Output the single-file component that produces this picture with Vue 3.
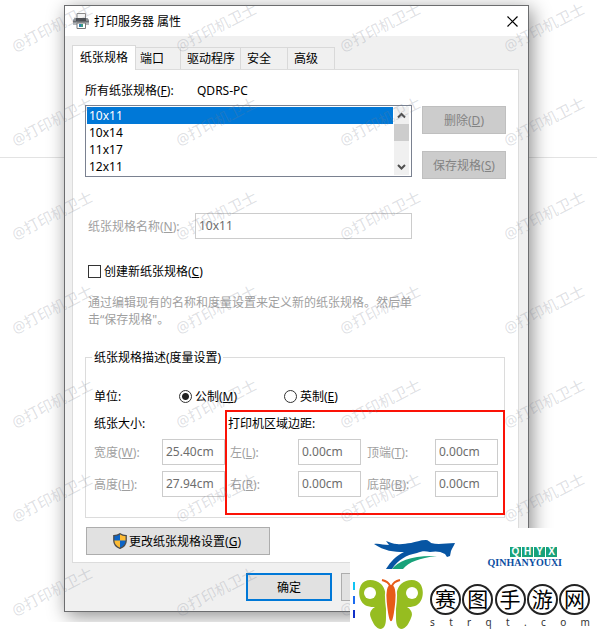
<template>
  <div class="page">
    <div class="desktop">
      <main class="dialog">
        <header class="titlebar">
          <svg class="printer" viewBox="0 0 16 16">
            <path d="M4 .5h8.500v6H4z" fill="#f4f4f4" stroke="#8b8b8b" />
            <path d="M1.500 5h13L16 7v5H0V7z" fill="#8b8f93" />
            <path d="M3 5h10v3H3z" fill="#4c4f53" />
            <path d="M0 8h16v1.500H0z" fill="#6a6d71" />
            <path d="M0 9.500h16V12H0z" fill="#b3b6b9" />
            <path d="M4 10h8.500v5.500H4z" fill="#fff" stroke="#777" />
            <path d="M6 11h2v3H6z" fill="#2f80b5" />
            <path d="M8 11h2v3H8z" fill="#3d9b80" />
          </svg>
          <h1>打印服务器 属性</h1>
          <button class="close" aria-label="关闭">
            <svg viewBox="0 0 11 11"><path d="M.5 .5l10 10M10.500 .5l-10 10" /></svg>
          </button>
        </header>

        <nav class="tabs">
          <button
            v-for="tab in tabs"
            :key="tab"
            :class="{ active: tab === activeTab }"
            @click="activeTab = tab"
          >{{ tab }}</button>
        </nav>

        <section class="panel">
          <div class="server">
            <label for="forms">所有纸张规格(<u>F</u>):</label>
            <span>QDRS-PC</span>
          </div>

          <div class="forms">
            <div class="listbox">
              <select id="forms" v-model="form" size="4">
                <option v-for="name in forms" :key="name">{{ name }}</option>
              </select>
              <div class="scrollbar">
                <svg viewBox="0 0 15 17"><path d="M4 10.500l3.500-3.500 3.500 3.500" /></svg>
                <div class="thumb"></div>
                <svg viewBox="0 0 15 17"><path d="M4 7l3.500 3.500L11 7" /></svg>
              </div>
            </div>
            <div class="form-actions">
              <button disabled>删除(<u>D</u>)</button>
              <button disabled>保存规格(<u>S</u>)</button>
            </div>
            <div class="name-row">
              <label for="formName">纸张规格名称(<u>N</u>):</label>
              <input id="formName" type="text" :value="form" disabled />
            </div>
          </div>

          <label class="create">
            <input v-model="create" type="checkbox" />
            <span>创建新纸张规格(<u>C</u>)</span>
          </label>
          <p class="hint">通过编辑现有的名称和度量设置来定义新的纸张规格。然后单击“保存规格"。</p>

          <fieldset>
            <legend>纸张规格描述(度量设置)</legend>
            <div class="units">
              <span>单位:</span>
              <label v-for="u in units" :key="u.key">
                <input v-model="unit" type="radio" name="unit" :value="u.key" />
                <span>{{ u.text }}(<u>{{ u.key }}</u>)</span>
              </label>
            </div>
            <div class="measures">
              <div class="size">
                <h2>纸张大小:</h2>
                <div class="fields">
                  <template v-for="f in sizes" :key="f.key">
                    <label :for="'f' + f.key">{{ f.text }}(<u>{{ f.key }}</u>):</label>
                    <input :id="'f' + f.key" type="text" :value="f.value" disabled />
                  </template>
                </div>
              </div>
              <div class="margins">
                <h2>打印机区域边距:</h2>
                <div class="fields">
                  <template v-for="f in margins" :key="f.key">
                    <label :for="'f' + f.key">{{ f.text }}(<u>{{ f.key }}</u>):</label>
                    <input :id="'f' + f.key" type="text" :value="f.value" disabled />
                  </template>
                </div>
              </div>
            </div>
          </fieldset>

          <button class="change">
            <svg viewBox="0 0 14 16">
              <path d="M7 .5C5 2 3 2.500 .8 2.500v5C.8 11 3.500 14 7 15.500z" fill="#0b63c5" />
              <path d="M7 .5c2 1.500 4 2 6.200 2v5c0 3.500-2.700 6.500-6.200 8z" fill="#fdbb33" />
              <path d="M.8 7.500H7v8C3.500 14 .8 11 .8 7.500z" fill="#fdbb33" />
              <path d="M7 7.500h6.200c0 3.500-2.700 6.500-6.200 8z" fill="#0b63c5" />
              <path d="M7 .7C5 2.200 3 2.600 .8 2.600v4.900C.8 11 3.500 14 7 15.300c3.500-1.300 6.200-4.300 6.200-7.800V2.600C11 2.600 9 2.200 7 .7z" fill="none" stroke="#4c4c4c" stroke-width="1.300" />
            </svg>
            <span>更改纸张规格设置(<u>G</u>)</span>
          </button>
        </section>

        <footer>
          <button class="primary">确定</button>
          <button></button>
        </footer>
      </main>

      <div class="watermarks" aria-hidden="true">
        <span v-for="n in 28" :key="n">@打印机卫士</span>
      </div>
    </div>

    <aside class="logos">
      <div class="brands">
        <svg class="dragon" viewBox="0 0 82 30">
          <path d="M0 4c5-1 9 1 15 1l-3-4c4 1 7 3 11 3 5 1 9-1 14-1 5-1 9-3 15-3 2 0 4 2 5 3 8 2 15 0 24 0-1 3-3 5-4 8l-1 5-3 1-2-3c-5-3-10-3-15-2-5-1-8-1-13 1-11 2-19 7-25 16h-6c5-8 10-13 18-17C20 12 10 11 0 4z" fill="#0755a3" />
          <path d="M18 29c6-8 20-14 45-13-18 2-28 6-34 13z" fill="#18a27a" />
        </svg>
        <div class="qhyx">
          <div class="tiles"><b v-for="c in 'QHYX'" :key="c">{{ c }}</b></div>
          <strong>QINHANYOUXI</strong>
        </div>
      </div>
      <div class="site">
        <div class="bars"><i></i><i></i><i></i></div>
        <svg class="butterfly" viewBox="0 0 64 50">
          <path d="M27 37C27 26 29 12 22 5 16 0 6-1 2 6c-4 8-1 19 6 21 3 1 6 1 8 1-5 3-6 7-4 11 2 5 5 11 10 11 5-1 5-8 5-13z" fill="#96bd20" />
          <path d="M37 37C37 26 35 12 42 5c6-5 16-6 20 1 4 8 1 19-6 21-3 1-6 1-8 1 5 3 6 7 4 11-2 5-5 11-10 11-5-1-5-8-5-13z" fill="#96bd20" />
          <circle cx="11" cy="14" r="6" fill="#fff" />
          <circle cx="53" cy="14" r="6" fill="#fff" />
          <path d="M32 5c5 0 6 9 5 18-1 10-2 20-5 20s-4-10-5-20c-1-9 0-18 5-18z" fill="#e75b18" stroke="#fff" stroke-width="1.500" />
          <path d="M31 7c-1-3-4-5-8-6M33 7c1-3 4-5 8-6" fill="none" stroke="#e75b18" stroke-width="2" />
        </svg>
        <div class="wordmark">
          <div class="circles"><span v-for="c in '赛图手游网'" :key="c">{{ c }}</span></div>
          <div class="domain"><span v-for="(c, i) in 'strqt.com'" :key="i">{{ c }}</span></div>
        </div>
      </div>
    </aside>
  </div>
</template>

<script setup>
import { ref } from "vue";

const tabs = ["纸张规格", "端口", "驱动程序", "安全", "高级"];
const activeTab = ref("纸张规格");

const forms = ["10x11", "10x14", "11x17", "12x11"];
const form = ref("10x11");
const create = ref(false);

const units = [
  { text: "公制", key: "M" },
  { text: "英制", key: "E" },
];
const unit = ref("M");

const sizes = [
  { text: "宽度", key: "W", value: "25.40cm" },
  { text: "高度", key: "H", value: "27.94cm" },
];

const margins = [
  { text: "左", key: "L", value: "0.00cm" },
  { text: "顶端", key: "T", value: "0.00cm" },
  { text: "右", key: "R", value: "0.00cm" },
  { text: "底部", key: "B", value: "0.00cm" },
];
</script>

<style>
body {
  background: #fff;
}
</style>

<style scoped>
* {
  box-sizing: border-box;
}

.page {
  position: relative;
  padding-bottom: 12px;
  font-family: "Noto Sans", "Noto Sans CJK SC", sans-serif;
  font-size: 12px;
  line-height: 17px;
  color: #000;
}

.desktop {
  position: relative;
  overflow: hidden;
  padding: 5px 71px 10px 64px;
}

.desktop::before {
  content: "";
  position: absolute;
  top: 157px;
  left: 0;
  right: 3px;
  border-top: 1px solid #e3e3e3;
}

.dialog {
  position: relative;
  border: 1px solid #6c6d6f;
  background: #f0f0f0;
  box-shadow: 3px 4px 18px rgba(0, 0, 0, 0.45);
}

button,
input,
select {
  margin: 0;
  font: inherit;
}

h1,
h2 {
  margin: 0;
  font-size: 12px;
  font-weight: 400;
}

.titlebar {
  display: flex;
  align-items: center;
  height: 30px;
  padding: 0 10px 0 8px;
  background: #fff;
}

.printer {
  width: 16px;
  height: 16px;
  margin-right: 5px;
}

.close {
  display: flex;
  margin-left: auto;
  padding: 0;
  border: none;
  background: none;
}

.close svg {
  width: 11px;
  height: 11px;
  stroke: #000;
  stroke-width: 1.2;
}

.tabs {
  display: flex;
  align-items: flex-end;
  margin-top: 9px;
  padding-left: 7px;
}

.tabs button {
  min-width: 47px;
  height: 22px;
  padding: 0 5px 0 6px;
  border: 1px solid #d9d9d9;
  border-width: 1px 1px 0 0;
  background: #f0f0f0;
  color: #000;
  text-align: left;
}

.tabs .active {
  position: relative;
  height: 25px;
  margin: 0 -2px -1px 0;
  padding: 0 7px 2px;
  border-left-width: 1px;
  background: #fff;
}

.panel {
  margin: 0 9px 0 7px;
  padding: 12px 12px 7px;
  border: 1px solid #dcdcdc;
  background: #fff;
}

.server {
  display: flex;
  margin-bottom: 6px;
}

.server label {
  width: 112px;
}

.forms {
  display: grid;
  grid-template-columns: 1fr 84px;
  column-gap: 10px;
}

.listbox {
  display: flex;
  height: 72px;
  padding: 1px;
  border: 1px solid #7a8190;
}

select {
  flex: 1;
  height: 68px;
  padding: 0;
  border: none;
  border-radius: 0;
  outline: none;
  background: #fff;
  overflow: hidden;
  scrollbar-width: none;
}

option {
  height: 17px;
  min-height: 17px;
  padding: 0 2px;
  color: #000;
}

option:checked {
  background: #0078d7 linear-gradient(#0078d7, #0078d7);
  color: #fff;
}

.scrollbar {
  width: 15px;
  margin: 0 1px;
  background: #f0f0f0;
  display: flex;
  flex-direction: column;
}

.scrollbar svg {
  width: 15px;
  height: 17px;
  fill: none;
  stroke: #505050;
  stroke-width: 2;
}

.scrollbar svg:last-child {
  margin-top: auto;
}

.thumb {
  height: 17px;
  background: #cdcdcd;
}

.form-actions {
  display: flex;
  flex-direction: column;
  gap: 17px;
  padding-top: 1px;
}

.form-actions button,
.change,
footer button {
  height: 28px;
  padding: 0;
  border: 1px solid #adadad;
  background: #e1e1e1;
  color: #000;
}

.form-actions button {
  border-color: #bfbfbf;
  background: #ccc;
  color: #838383;
}

.name-row {
  display: flex;
  align-items: center;
  margin-top: 34px;
  padding-left: 3px;
  color: #9f9f9f;
}

.name-row label {
  width: 107px;
}

input[type="text"] {
  min-width: 0;
  width: 100%;
  height: 26px;
  padding: 0 3px 2px;
  border: 1px solid #ccc;
  background: #fff;
  color: #6d6d6d;
}

.name-row input[type="text"] {
  flex: 1;
}

.create {
  display: flex;
  align-items: center;
  gap: 3px;
  width: max-content;
  margin-top: 24px;
  padding-left: 3px;
}

input[type="checkbox"],
input[type="radio"] {
  appearance: none;
  width: 13px;
  height: 13px;
  border: 1px solid #333;
  background: #fff;
}

input[type="radio"] {
  border-radius: 50%;
}

input[type="radio"]:checked {
  background: radial-gradient(circle, #222 3px, #fff 4px);
}

input[type="checkbox"]:checked {
  background: #333;
}

.hint {
  width: 325px;
  margin: 14px 0 21px;
  padding-left: 3px;
  box-sizing: content-box;
  color: #9f9f9f;
}

fieldset {
  min-width: 0;
  margin: 0 1px 0 0;
  padding: 0 0 2px;
  border: 1px solid #dcdcdc;
}

legend {
  margin-left: 6px;
  padding: 0 2px;
}

.units {
  display: flex;
  align-items: center;
  padding: 22px 0 5px 8px;
}

.units > span {
  width: 85px;
}

.units label {
  display: flex;
  align-items: center;
  gap: 3px;
  width: 105px;
}

.measures {
  display: flex;
}

.size {
  width: 139px;
  padding: 5px 0 0 8px;
}

.margins {
  flex: 1;
  margin-right: -1px;
  padding: 3px 5px 16px 1px;
  border: 2px solid #fb1206;
}

.fields {
  display: grid;
  grid-template-columns: 68px 1fr;
  row-gap: 6px;
  margin-top: 7px;
  align-items: center;
  color: #9f9f9f;
}

.margins .fields {
  grid-template-columns: 68px 1fr 74px 1fr;
  padding-left: 2px;
}

.margins label:nth-of-type(even) {
  padding-left: 6px;
}

.change {
  display: flex;
  align-items: center;
  justify-content: center;
  gap: 2px;
  width: 184px;
  margin: 9px 0 0 1px;
  padding-right: 2px;
}

.change svg {
  width: 14px;
  height: 16px;
}

footer {
  display: flex;
  gap: 9px;
  padding: 10px 10px 10px 181px;
}

footer button {
  width: 86px;
}

footer .primary {
  border: 2px solid #0078d7;
}

.watermarks {
  position: absolute;
  top: -20px;
  left: -30px;
  display: grid;
  grid-template-columns: repeat(4, 164px);
  grid-auto-rows: 94px;
  place-items: center;
  pointer-events: none;
  font-size: 15px;
  color: rgba(120, 125, 140, 0.24);
}

.watermarks span {
  transform: rotate(-27deg);
}

.logos {
  position: absolute;
  right: 0;
  bottom: 0;
  width: 250px;
  height: 106px;
  padding: 12px 10px 0 3px;
  background: #fff;
}

.brands {
  display: flex;
  justify-content: space-between;
  padding: 0 28px 0 21px;
}

.dragon {
  width: 82px;
  height: 30px;
}

.qhyx {
  padding-top: 7px;
  font-family: "Liberation Serif", serif;
  font-size: 10px;
  line-height: 12px;
  color: #0b4ea2;
}

.tiles {
  display: flex;
  justify-content: flex-end;
  gap: 1px;
  padding-right: 5px;
}

.tiles b {
  width: 11px;
  height: 10px;
  background: #18a27a;
  color: #fff;
  font-family: "Liberation Sans", sans-serif;
  line-height: 10px;
  text-align: center;
}

.qhyx strong {
  display: block;
}

.site {
  display: flex;
  margin-top: 8px;
}

.bars {
  display: flex;
  flex-direction: column;
  gap: 6px;
  width: 6px;
  padding-top: 4px;
}

.bars i {
  width: 2px;
  height: 8px;
  background: #1c6cf0;
}

.bars i:first-child {
  background: #10c4f4;
}

.bars i:last-child {
  background: #1130c8;
}

.butterfly {
  width: 64px;
  height: 50px;
  margin-top: 1px;
}

.wordmark {
  flex: 1;
  padding: 6px 0 0 7px;
}

.circles,
.domain {
  display: flex;
  justify-content: space-between;
}

.circles span {
  width: 31px;
  height: 31px;
  border: 2px solid #222;
  border-radius: 50%;
  font-size: 21px;
  line-height: 27px;
  display: flex;
  justify-content: center;
}

.domain {
  font-size: 10px;
  line-height: 14px;
  color: #333;
}
</style>
